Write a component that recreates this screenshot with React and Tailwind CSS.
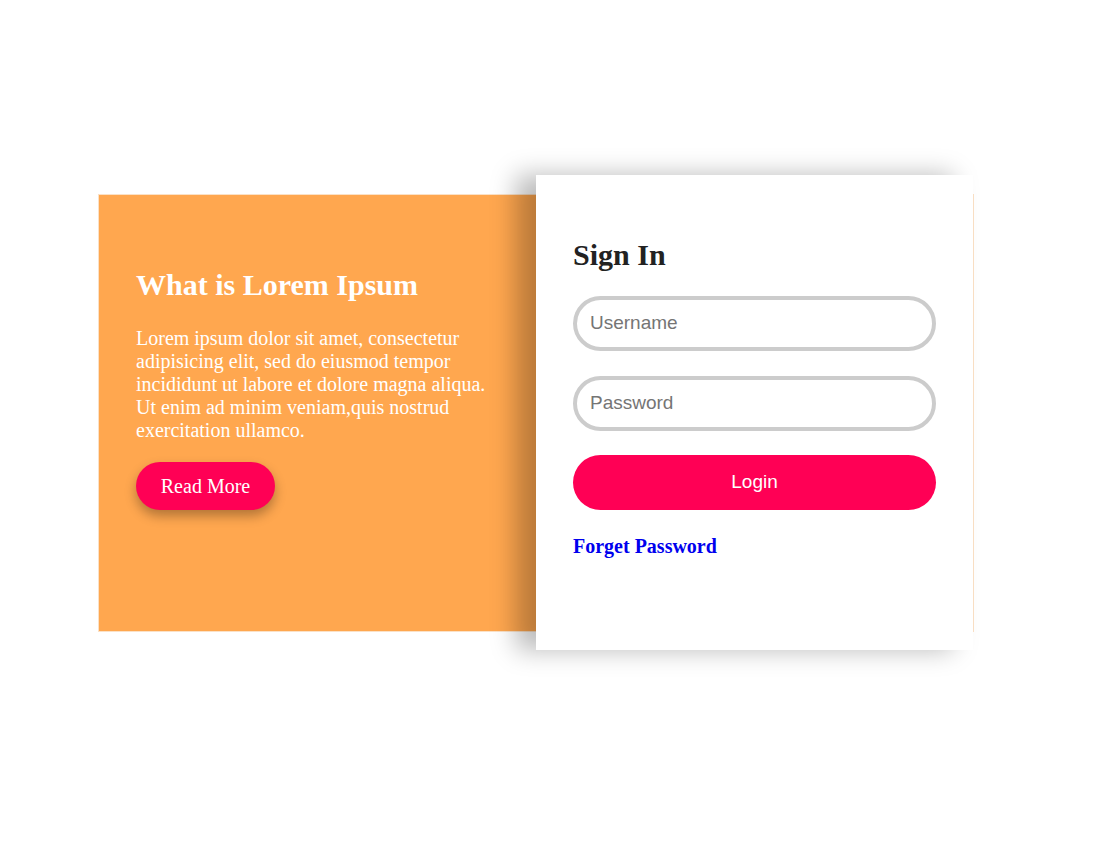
import React from "react";

// Split card: orange intro panel + raised sign-in card
const SERIF = "font-['Liberation_Serif','Times_New_Roman',serif]";
const SANS = "font-['Liberation_Sans',Arial,sans-serif]";

function IntroPanel() {
  return (
    <div className={`w-[437px] bg-[#ffa74f] px-[37px] pt-[73px] text-white ${SERIF}`}>
      <h2 className="text-[30px] font-bold leading-[34.5px]">What is Lorem Ipsum</h2>
      <p className="mt-[24px] text-[20px] leading-[23px]">
        Lorem ipsum dolor sit amet, consectetur adipisicing elit, sed do eiusmod tempor
        incididunt ut labore et dolore magna aliqua. Ut enim ad minim veniam,quis nostrud
        exercitation ullamco.
      </p>
      <button className="mt-[20px] h-[48px] w-[139px] rounded-full bg-[#ff0055] text-[20px] text-white shadow-[0_6px_12px_rgba(0,0,0,0.3)]">
        Read More
      </button>
    </div>
  );
}

function SignInCard() {
  return (
    <div className="relative z-10 mt-[-20px] mb-[-19px] w-[437px] bg-white px-[37px] pt-[63px] shadow-[-20px_0_24px_rgba(0,0,0,0.27)]">
      <h2 className={`text-[30px] font-bold leading-[34.5px] text-[#222] ${SERIF}`}>Sign In</h2>
      <input
        type="text"
        placeholder="Username"
        className={`mt-[23px] block h-[55px] w-full rounded-full border-4 border-[#cccccc] px-[13px] text-[19px] outline-none placeholder:text-[#757575] ${SANS}`}
      />
      <input
        type="password"
        placeholder="Password"
        className={`mt-[25px] block h-[55px] w-full rounded-full border-4 border-[#cccccc] px-[13px] text-[19px] outline-none placeholder:text-[#757575] ${SANS}`}
      />
      <button className={`mt-[24px] block h-[55px] w-full rounded-full bg-[#ff0055] text-[19px] text-white ${SANS}`}>
        Login
      </button>
      <a href="#" className={`mt-[25px] block text-[20px] font-bold leading-[23px] text-[#0000ee] ${SERIF}`}>
        Forget Password
      </a>
    </div>
  );
}

export default function App() {
  return (
    <div className="min-h-[842px] w-full bg-white pt-[194px]">
      <div className="ml-[98px] flex h-[438px] w-[876px] border border-[#fbe1c6]">
        <IntroPanel />
        <SignInCard />
      </div>
    </div>
  );
}
